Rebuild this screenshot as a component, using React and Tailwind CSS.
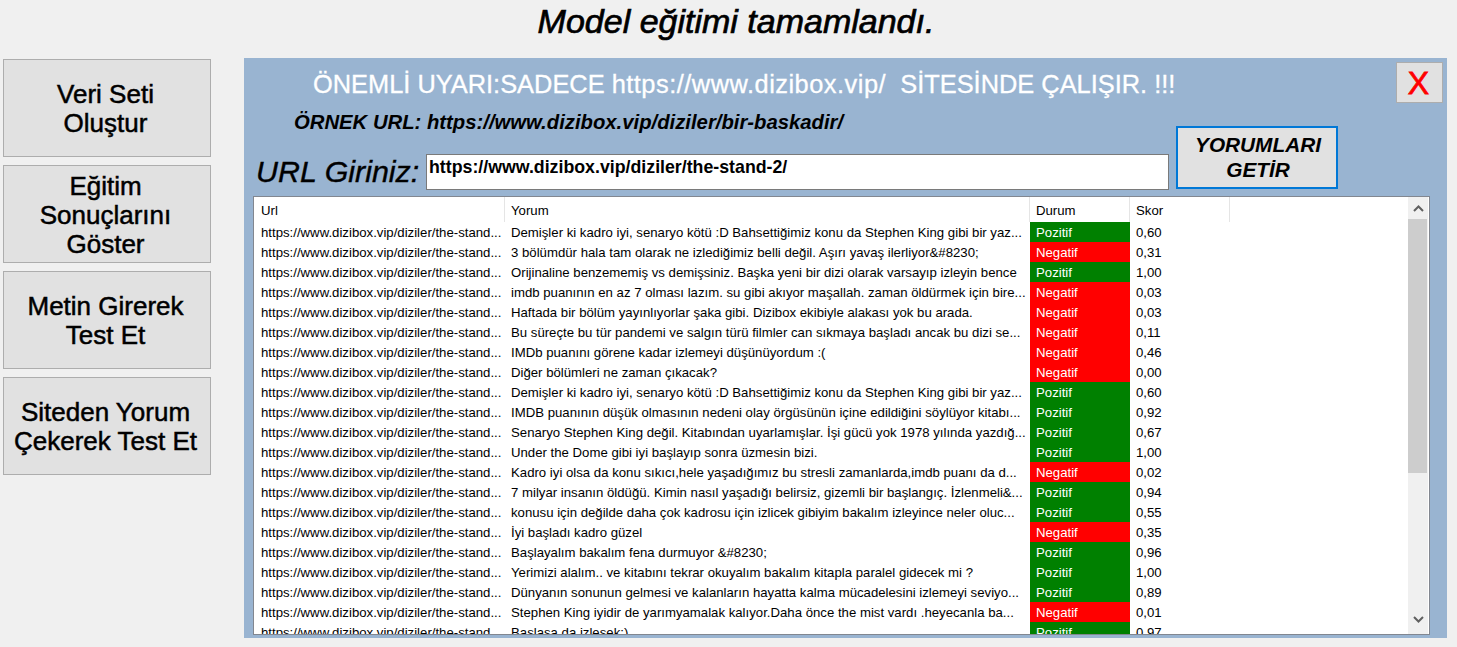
import React from 'react';

const URL_TEXT = 'https://www.dizibox.vip/diziler/the-stand...';

const rows = [
  ['Demişler ki kadro iyi, senaryo kötü :D Bahsettiğimiz konu da Stephen King gibi bir yaz...', 'Pozitif', '0,60'],
  ['3 bölümdür hala tam olarak ne izlediğimiz belli değil. Aşırı yavaş ilerliyor&#8230;', 'Negatif', '0,31'],
  ['Orijinaline benzememiş vs demişsiniz. Başka yeni bir dizi olarak varsayıp izleyin bence', 'Pozitif', '1,00'],
  ['imdb puanının en az 7 olması lazım. su gibi akıyor maşallah. zaman öldürmek için bire...', 'Negatif', '0,03'],
  ['Haftada bir bölüm yayınlıyorlar şaka gibi. Dizibox ekibiyle alakası yok bu arada.', 'Negatif', '0,03'],
  ['Bu süreçte bu tür pandemi ve salgın türü filmler can sıkmaya başladı ancak bu dizi se...', 'Negatif', '0,11'],
  ['IMDb puanını görene kadar izlemeyi düşünüyordum :(', 'Negatif', '0,46'],
  ['Diğer bölümleri ne zaman çıkacak?', 'Negatif', '0,00'],
  ['Demişler ki kadro iyi, senaryo kötü :D Bahsettiğimiz konu da Stephen King gibi bir yaz...', 'Pozitif', '0,60'],
  ['IMDB puanının düşük olmasının nedeni olay örgüsünün içine edildiğini söylüyor kitabı...', 'Pozitif', '0,92'],
  ['Senaryo Stephen King değil. Kitabından uyarlamışlar. İşi gücü yok 1978 yılında yazdığ...', 'Pozitif', '0,67'],
  ['Under the Dome gibi iyi başlayıp sonra üzmesin bizi.', 'Pozitif', '1,00'],
  ['Kadro iyi olsa da konu sıkıcı,hele yaşadığımız bu stresli zamanlarda,imdb puanı da d...', 'Negatif', '0,02'],
  ['7 milyar insanın öldüğü. Kimin nasıl yaşadığı belirsiz, gizemli bir başlangıç. İzlenmeli&...', 'Pozitif', '0,94'],
  ['konusu için değilde daha çok kadrosu için izlicek gibiyim bakalım izleyince neler oluc...', 'Pozitif', '0,55'],
  ['İyi başladı kadro güzel', 'Negatif', '0,35'],
  ['Başlayalım bakalım fena durmuyor &#8230;', 'Pozitif', '0,96'],
  ['Yerimizi alalım.. ve kitabını tekrar okuyalım bakalım kitapla paralel gidecek mi ?', 'Pozitif', '1,00'],
  ['Dünyanın sonunun gelmesi ve kalanların hayatta kalma mücadelesini izlemeyi seviyo...', 'Pozitif', '0,89'],
  ['Stephen King iyidir de yarımyamalak kalıyor.Daha önce the mist vardı .heyecanla ba...', 'Negatif', '0,01'],
  ['Başlasa da izlesek:)', 'Pozitif', '0,97'],
];

const sideButtons = [
  ['Veri Seti', 'Oluştur'],
  ['Eğitim', 'Sonuçlarını', 'Göster'],
  ['Metin Girerek', 'Test Et'],
  ['Siteden Yorum', 'Çekerek Test Et'],
];

function SideButton({ lines }) {
  return (
    <button className="w-[208px] h-[98px] pr-[3px] pt-[2px] bg-[#e1e1e1] border border-[#adadad] flex flex-col items-center justify-center text-[26px] leading-[29px] text-black [-webkit-text-stroke:0.5px_black]">
      {lines.map((line) => (
        <span key={line}>{line}</span>
      ))}
    </button>
  );
}

export default function App() {
  return (
    <div className="w-[1457px] h-[647px] overflow-hidden bg-[#f0f0f0] font-['Liberation_Sans',Arial,sans-serif]">
      <h1 className="h-[58px] pl-[15px] pt-[3px] text-center text-[34px] leading-[37px] italic text-black [-webkit-text-stroke:0.7px_black]">
        Model eğitimi tamamlandı.
      </h1>

      <div className="flex items-start pl-[3px]">
        {/* Left menu */}
        <div className="w-[208px] mt-px flex flex-col gap-2">
          {sideButtons.map((lines) => (
            <SideButton key={lines[0]} lines={lines} />
          ))}
        </div>

        {/* Main panel */}
        <div className="ml-[33px] w-[1203px] h-[580px] bg-[#99b4d1] flex flex-col">
          <div className="h-[52px] flex items-start justify-between pr-[4px]">
            <div className="pl-[69px] pt-[12px] text-[25.4px] leading-[28px] text-white whitespace-pre [-webkit-text-stroke:0.3px_white]">
              ÖNEMLİ UYARI:SADECE <span className="tracking-[0.5px]">https://www.dizibox.vip/</span>  SİTESİNDE ÇALIŞIR. !!!
            </div>
            <button className="mt-[4px] w-[47px] h-[41px] pr-[2px] bg-[#e1e1e1] border border-[#adadad] text-[32px] leading-none text-[#ff0000] [-webkit-text-stroke:0.8px_#ff0000]">
              X
            </button>
          </div>

          <div className="h-[86px] flex">
            <div className="w-[932px] shrink-0">
              <div className="pl-[50px] h-[44px] text-[20.3px] leading-[24px] italic font-bold text-black whitespace-pre">
                ÖRNEK URL: https://www.dizibox.vip/diziler/bir-baskadir/
              </div>
              <div className="flex items-start pl-[12px]">
                <span className="w-[170px] text-[30.4px] leading-[34px] italic text-black whitespace-nowrap [-webkit-text-stroke:0.4px_black]">URL Giriniz:</span>
                <div className="w-[743px] h-[36px] bg-white border border-[#7a7a7a] px-[2px] text-[17.75px] leading-[24px] font-bold text-black whitespace-nowrap">
                  https://www.dizibox.vip/diziler/the-stand-2/
                </div>
              </div>
            </div>
            <button className="mt-[16px] w-[162px] h-[63px] pl-[2px] pb-[2px] bg-[#e1e1e1] border-2 border-[#0078d7] text-[20.8px] leading-[25px] italic font-bold text-black">
              YORUMLARI
              <br />
              GETİR
            </button>
          </div>

          {/* Comments list */}
          <div className="ml-[9px] w-[1177px] h-[439px] bg-white border border-[#828790] flex text-[13.2px] leading-[22px] text-black overflow-hidden">
            <div className="w-[1154px] shrink-0 overflow-hidden">
              <div className="flex h-[25px] items-center">
                <div className="w-[251px] h-full pl-[7px] leading-[27px] border-r border-[#e5e5e5]">Url</div>
                <div className="w-[525px] h-full pl-[6px] leading-[27px] border-r border-[#e5e5e5]">Yorum</div>
                <div className="w-[100px] h-full pl-[6px] leading-[27px] border-r border-[#e5e5e5]">Durum</div>
                <div className="w-[100px] h-full pl-[6px] leading-[27px] border-r border-[#e5e5e5]">Skor</div>
              </div>
              {rows.map((row, i) => (
                <div key={i} className="flex h-[20px] whitespace-nowrap">
                  <div className="w-[251px] pl-[7px]">{URL_TEXT}</div>
                  <div className="w-[525px] pl-[6px]">{row[0]}</div>
                  <div className={row[1] === 'Pozitif' ? 'w-[100px] pl-[6px] bg-[#008000] text-white' : 'w-[100px] pl-[6px] bg-[#ff0000] text-white'}>
                    {row[1]}
                  </div>
                  <div className="w-[100px] pl-[6px]">{row[2]}</div>
                </div>
              ))}
            </div>

            {/* Scrollbar */}
            <div className="w-[20px] h-full ml-auto mr-px bg-[#f0f0f0] flex flex-col">
              <div className="h-[22px] flex items-center justify-center">
                <svg width="11" height="7" viewBox="0 0 11 7" fill="none" stroke="#606060" strokeWidth="2"><path d="M1 6l4.5-4.5L10 6" /></svg>
              </div>
              <div className="w-[19px] h-[254px] bg-[#cdcdcd]" />
              <div className="mt-auto h-[18px] flex items-start justify-center">
                <svg width="11" height="7" viewBox="0 0 11 7" fill="none" stroke="#606060" strokeWidth="2"><path d="M1 1l4.5 4.5L10 1" /></svg>
              </div>
            </div>
          </div>
        </div>
      </div>
    </div>
  );
}
